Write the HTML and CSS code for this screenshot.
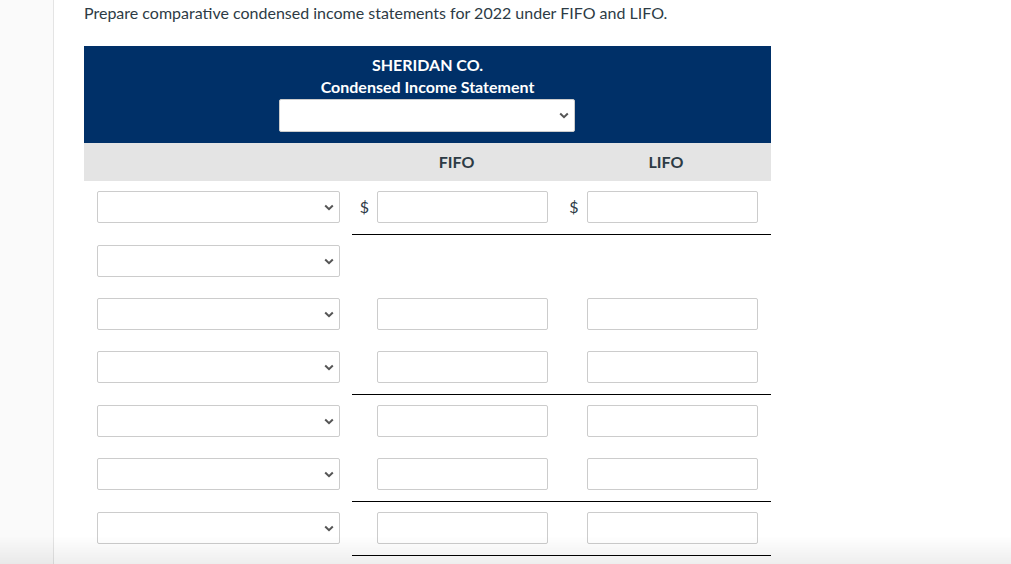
FILE: index.html
```html
<!DOCTYPE html>
<html lang="en">
<head>
<meta charset="utf-8">
<title>Condensed Income Statement</title>
<link rel="stylesheet" href="styles.css">
</head>
<body>
<div class="page">
  <aside class="sidebar"></aside>
  <main class="content">
    <p class="prompt">Prepare comparative condensed income statements for 2022 under FIFO and LIFO.</p>
    <div class="statement">
      <div class="banner">
        <div class="banner-line">SHERIDAN CO.</div>
        <div class="banner-line">Condensed Income Statement</div>
        <div class="select select-wide"><svg class="chev" width="10" height="7" viewBox="0 0 10 7"><path d="M1.2 1.5 L5 5.2 L8.8 1.5" fill="none" stroke="#555" stroke-width="2"/></svg></div>
      </div>
      <div class="colhead">
        <div class="c-label"></div>
        <div class="c-num">FIFO</div>
        <div class="c-num">LIFO</div>
      </div>

      <div class="row">
        <div class="c-label"><div class="select"><svg class="chev" width="10" height="7" viewBox="0 0 10 7"><path d="M1.2 1.5 L5 5.2 L8.8 1.5" fill="none" stroke="#555" stroke-width="2"/></svg></div></div>
        <div class="c-num ruled"><span class="cur">$</span><div class="input"></div></div>
        <div class="c-num ruled"><span class="cur">$</span><div class="input"></div></div>
      </div>

      <div class="row">
        <div class="c-label"><div class="select"><svg class="chev" width="10" height="7" viewBox="0 0 10 7"><path d="M1.2 1.5 L5 5.2 L8.8 1.5" fill="none" stroke="#555" stroke-width="2"/></svg></div></div>
        <div class="c-num"></div>
        <div class="c-num"></div>
      </div>

      <div class="row">
        <div class="c-label"><div class="select"><svg class="chev" width="10" height="7" viewBox="0 0 10 7"><path d="M1.2 1.5 L5 5.2 L8.8 1.5" fill="none" stroke="#555" stroke-width="2"/></svg></div></div>
        <div class="c-num"><span class="cur"></span><div class="input"></div></div>
        <div class="c-num"><span class="cur"></span><div class="input"></div></div>
      </div>

      <div class="row">
        <div class="c-label"><div class="select"><svg class="chev" width="10" height="7" viewBox="0 0 10 7"><path d="M1.2 1.5 L5 5.2 L8.8 1.5" fill="none" stroke="#555" stroke-width="2"/></svg></div></div>
        <div class="c-num ruled"><span class="cur"></span><div class="input"></div></div>
        <div class="c-num ruled"><span class="cur"></span><div class="input"></div></div>
      </div>

      <div class="row">
        <div class="c-label"><div class="select"><svg class="chev" width="10" height="7" viewBox="0 0 10 7"><path d="M1.2 1.5 L5 5.2 L8.8 1.5" fill="none" stroke="#555" stroke-width="2"/></svg></div></div>
        <div class="c-num"><span class="cur"></span><div class="input"></div></div>
        <div class="c-num"><span class="cur"></span><div class="input"></div></div>
      </div>

      <div class="row">
        <div class="c-label"><div class="select"><svg class="chev" width="10" height="7" viewBox="0 0 10 7"><path d="M1.2 1.5 L5 5.2 L8.8 1.5" fill="none" stroke="#555" stroke-width="2"/></svg></div></div>
        <div class="c-num ruled"><span class="cur"></span><div class="input"></div></div>
        <div class="c-num ruled"><span class="cur"></span><div class="input"></div></div>
      </div>

      <div class="row">
        <div class="c-label"><div class="select"><svg class="chev" width="10" height="7" viewBox="0 0 10 7"><path d="M1.2 1.5 L5 5.2 L8.8 1.5" fill="none" stroke="#555" stroke-width="2"/></svg></div></div>
        <div class="c-num ruled"><span class="cur"></span><div class="input"></div></div>
        <div class="c-num ruled"><span class="cur"></span><div class="input"></div></div>
      </div>
    </div>
  </main>
</div>
<div class="fade"></div>
</body>
</html>
```

FILE: styles.css
```css
html, body {
  margin: 0;
  padding: 0;
  background: #ffffff;
}
body {
  font-family: Lato, "Open Sans", "Liberation Sans", sans-serif;
  font-size: 16px;
  color: #2d3b45;
  overflow: hidden;
}
.page {
  display: flex;
  min-height: 564px;
}
.sidebar {
  width: 53px;
  flex: none;
  background: #fafafa;
  border-right: 1px solid #e4e4e4;
}
.content {
  flex: 1;
  padding-left: 30px;
}
.prompt {
  margin: 0;
  padding-top: 2px;
  line-height: 22px;
  height: 44px;
}
.statement {
  width: 687px;
}
.banner {
  background: #003068;
  color: #ffffff;
  font-weight: 700;
  text-align: center;
  padding: 8px 0 11px;
  display: flex;
  flex-direction: column;
  align-items: center;
}
.banner-line {
  line-height: 22px;
}
.select {
  box-sizing: border-box;
  width: 243px;
  height: 32px;
  background: #ffffff;
  border: 1px solid #cccccc;
  border-radius: 2px;
  display: flex;
  align-items: center;
  justify-content: flex-end;
  padding-right: 5px;
}
.select-wide {
  width: 296px;
  height: 33px;
  margin-top: 1px;
  margin-left: -1px;
}
.colhead {
  display: flex;
  background: #e4e4e4;
  height: 38px;
  align-items: center;
  font-weight: 700;
}
.c-label {
  width: 268px;
  flex: none;
  box-sizing: border-box;
  padding: 10px 0 11px 13px;
}
.c-num {
  width: 209px;
  flex: none;
  box-sizing: border-box;
  display: flex;
  align-items: flex-start;
  padding: 10px 13px 11px 0;
}
.c-num + .c-num {
  width: 210px;
  padding-right: 13px;
}
.c-num + .c-num .cur {
  width: 26px;
}
.colhead .c-num,
.colhead .c-num + .c-num {
  justify-content: center;
  padding: 0;
  margin-top: -2px;
}
.row {
  display: flex;
  align-items: stretch;
}
.ruled {
  border-bottom: 1px solid #000000;
}
.cur {
  width: 25px;
  flex: none;
  text-align: center;
  line-height: 32px;
}
.input {
  box-sizing: border-box;
  width: 171px;
  height: 32px;
  border: 1px solid #cccccc;
  border-radius: 2px;
  background: #ffffff;
}
.fade {
  position: fixed;
  left: 0;
  right: 0;
  bottom: 0;
  height: 28px;
  background: linear-gradient(to bottom, rgba(0,0,0,0), rgba(0,0,0,0.065));
  pointer-events: none;
}
```
